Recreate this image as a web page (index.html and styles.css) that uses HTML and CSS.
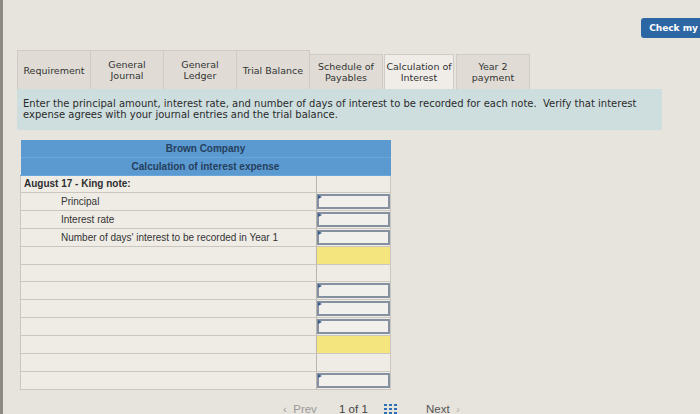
FILE: index.html
```html
<!DOCTYPE html>
<html lang="en">
<head>
    <meta charset="UTF-8">
    <title>Calculation of Interest</title>
    <link rel="stylesheet" href="styles.css">
</head>
<body>
    <div class="page">
        <div class="topbar">
            <button class="check-btn">Check my</button>
        </div>

        <div class="tabs">
            <div class="tab">Requirement</div>
            <div class="tab">General<br>Journal</div>
            <div class="tab">General<br>Ledger</div>
            <div class="tab">Trial Balance</div>
            <div class="tab low">Schedule of<br>Payables</div>
            <div class="tab low active">Calculation of<br>Interest</div>
            <div class="tab low">Year 2<br>payment</div>
        </div>

        <div class="instructions">
            Enter the principal amount, interest rate, and number of days of interest to be recorded for each note.&nbsp; Verify that interest expense agrees with your journal entries and the trial balance.
        </div>

        <table class="calc">
            <tr class="head"><td colspan="2">Brown Company</td></tr>
            <tr class="head"><td colspan="2">Calculation of interest expense</td></tr>
            <tr><td class="label bold">August 17 - King note:</td><td class="val"></td></tr>
            <tr><td class="label sub">Principal</td><td class="val input"><span></span></td></tr>
            <tr><td class="label sub">Interest rate</td><td class="val input"><span></span></td></tr>
            <tr><td class="label sub">Number of days' interest to be recorded in Year 1</td><td class="val input"><span></span></td></tr>
            <tr><td class="label"></td><td class="val yellow"></td></tr>
            <tr><td class="label"></td><td class="val"></td></tr>
            <tr><td class="label"></td><td class="val input"><span></span></td></tr>
            <tr><td class="label"></td><td class="val input"><span></span></td></tr>
            <tr><td class="label"></td><td class="val input"><span></span></td></tr>
            <tr><td class="label"></td><td class="val yellow"></td></tr>
            <tr><td class="label"></td><td class="val"></td></tr>
            <tr><td class="label"></td><td class="val input"><span></span></td></tr>
        </table>

        <div class="pager">
            <span class="prev">&lsaquo;&nbsp; Prev</span>
            <span class="count">1 of 1</span>
            <span class="grid-icon">
                <svg width="13" height="10" viewBox="0 0 13 10">
                    <rect x="0" y="0" width="3" height="2" fill="#2f6fb4"/>
                    <rect x="5" y="0" width="3" height="2" fill="#2f6fb4"/>
                    <rect x="10" y="0" width="3" height="2" fill="#2f6fb4"/>
                    <rect x="0" y="4" width="3" height="2" fill="#2f6fb4"/>
                    <rect x="5" y="4" width="3" height="2" fill="#2f6fb4"/>
                    <rect x="10" y="4" width="3" height="2" fill="#2f6fb4"/>
                    <rect x="0" y="8" width="3" height="2" fill="#2f6fb4"/>
                    <rect x="5" y="8" width="3" height="2" fill="#2f6fb4"/>
                    <rect x="10" y="8" width="3" height="2" fill="#2f6fb4"/>
                </svg>
            </span>
            <span class="next">Next &nbsp;<span class="arrow">&rsaquo;</span></span>
        </div>
    </div>
</body>
</html>
```

FILE: styles.css
```css
body {
    margin: 0;
    height: 414px;
    overflow: hidden;
    background: #e7e3dd;
    font-family: "DejaVu Sans", Verdana, sans-serif;
    color: #333;
}

.page {
    border-left: 3px solid #8d8a86;
    height: 100%;
    box-sizing: border-box;
}

.topbar {
    display: flex;
    justify-content: flex-end;
    padding-top: 18px;
    height: 21px;
}
.check-btn {
    height: 20px;
    padding: 0 2px 0 8px;
    background: #2d67a3;
    color: #fff;
    border: none;
    border-radius: 3px 0 0 3px;
    font-family: "DejaVu Sans", sans-serif;
    font-weight: bold;
    font-size: 9px;
    white-space: nowrap;
}

.tabs {
    display: flex;
    align-items: flex-end;
    margin: 11px 0 0 14px;
}
.tab {
    width: 74px;
    height: 39px;
    box-sizing: border-box;
    display: flex;
    align-items: center;
    justify-content: center;
    text-align: center;
    font-size: 9.5px;
    line-height: 11px;
    color: #333;
    background: #e0dcd5;
    border: 1px solid #d0cbc4;
    border-bottom: none;
    margin-right: -1px;
}
.tab.low {
    height: 35px;
}
.tab.active {
    width: 70px;
    background: #f0ede8;
    margin: 0 2px;
}

.instructions {
    margin-left: 14px;
    width: 645px;
    height: 41px;
    box-sizing: border-box;
    padding: 9px 6px 0;
    background: #cededf;
    font-size: 10px;
    line-height: 11px;
    color: #2b2b2b;
}

.calc {
    margin: 10px 0 0 17px;
    width: 371px;
    border-collapse: collapse;
    font-family: "Liberation Sans", Arial, sans-serif;
    font-size: 10px;
    color: #333;
}
.calc td {
    height: 17.6px;
    padding: 0;
    box-sizing: border-box;
}
.calc .head td {
    background: #5b9ad0;
    text-align: center;
    font-weight: bold;
    font-size: 10px;
    color: #25405e;
    border-bottom: 1px solid #6aa6d8;
}
.calc .label {
    width: 297px;
    background: #efece6;
    border-bottom: 1px solid #cbc7c0;
    border-left: 1px solid #cbc7c0;
    padding-left: 3px;
}
.calc .label.bold {
    font-weight: bold;
    color: #2e2e2e;
}
.calc .label.sub {
    padding-left: 40px;
}
.calc .val {
    width: 74px;
    background: #efece6;
    border-left: 1px solid #b9b5ae;
    border-right: 1px solid #cbc7c0;
    border-bottom: 1px solid #cbc7c0;
}
.calc .val.yellow {
    background: #f4e57e;
}
.calc .val.input {
    padding: 1px 0;
}
.calc .val.input span {
    display: block;
    position: relative;
    height: 100%;
    min-height: 15px;
    box-sizing: border-box;
    border: 2px solid #8590a0;
    background: #f2f0ec;
}
.calc .val.input span::before {
    content: "";
    position: absolute;
    top: -1px;
    left: -1px;
    border-left: 4px solid #3a5f8f;
    border-top: 2px solid transparent;
    border-bottom: 2px solid transparent;
}

.pager {
    display: flex;
    align-items: center;
    margin: 13px 0 0 280px;
    font-family: "Liberation Sans", Arial, sans-serif;
    font-size: 11.5px;
    color: #666;
}
.prev {
    color: #9a9a9a;
    width: 56px;
}
.count {
    color: #444;
    width: 45px;
}
.grid-icon {
    width: 42px;
    display: flex;
}
.next {
    color: #555;
}
.next .arrow {
    color: #b5b5b5;
}
```
